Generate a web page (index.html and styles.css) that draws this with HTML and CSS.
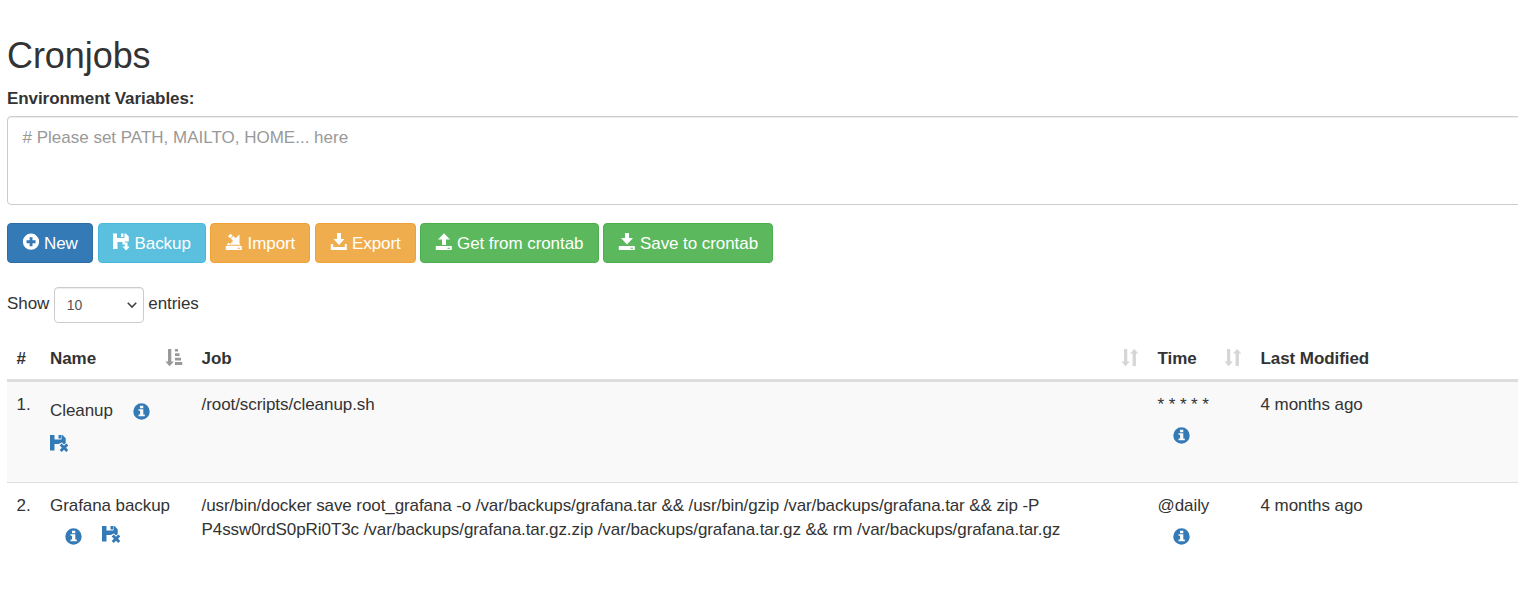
FILE: index.html
```html
<!DOCTYPE html>
<html lang="en">
<head>
<meta charset="utf-8">
<title>Cronjobs</title>
<link rel="stylesheet" href="styles.css">
</head>
<body>
<svg class="sprite" aria-hidden="true">
  <symbol id="plus" viewBox="0 0 17 17"><path fill-rule="evenodd" d="M8.500.5a7.700 7.700 0 1 1 0 15.400 7.700 7.700 0 0 1 0-15.400ZM7.200 4v2.800H4.300v2.900h2.900v2.800h2.700V9.700h2.900V6.800H9.900V4Z"/></symbol>
  <symbol id="backup" viewBox="0 0 18 18"><path d="M0 .5h4v4.500h7.500V.5h1.300l3 3V8.500h-4v3H9.500V9H4.500v7H0ZM8 .5h2.500v3.500H8ZM11.800 9.500h2.700v4h2.300L13.100 17.500l-3.600-4h2.300Z"/></symbol>
  <symbol id="saved-x" viewBox="0 0 18 18"><path d="M0 0h4.500v4.500h7V0h1l3.200 3.200V8L14 9.500 12 7.500 8.500 9H4.500v6.500H0ZM8.500 0H11v3.500H8.500ZM11.700 8.500l2.300 2.200 2.300-2.200 2 1.900-2.200 2.300 2.200 2.300-2 1.900-2.300-2.200-2.300 2.200-2-1.900 2.200-2.300-2.200-2.300Z"/></symbol>
  <symbol id="import" viewBox="0 0 18 18"><path fill-rule="evenodd" d="M3 3.300 5.600.8l2 2-2.500 2.500ZM5.800 5.500 8.300 3l2.300 2.300L14.500 1.500v9.800H4.800L8 8ZM3.500 9.500 1.700 12.300h14.100l-1-1.300H5ZM.8 13h16v4H.8ZM12.500 14.700v1h2.500v-1Z"/></symbol>
  <symbol id="export" viewBox="0 0 18 18"><path d="M7 0h4v6h3.500L9 12 3.500 6H7ZM.8 11h2.400v3h11.600v-3h2v6H.8Z"/></symbol>
  <symbol id="open" viewBox="0 0 18 18"><path fill-rule="evenodd" d="M9 .3l6 6.200h-4V12H7V6.500H3ZM.8 13h16v4H.8ZM12.500 14.700v1h2.500v-1Z"/></symbol>
  <symbol id="save" viewBox="0 0 18 18"><path fill-rule="evenodd" d="M7 0h4v5h4L9 11.500 3 5h4ZM.8 13h16v4H.8ZM12.500 14.700v1h2.500v-1Z"/></symbol>
  <symbol id="info" viewBox="0 0 17 17"><path fill-rule="evenodd" d="M8.500.3a8.200 8.200 0 1 1 0 16.400 8.200 8.200 0 0 1 0-16.400ZM7 2.700v2.500h3.300V2.700ZM5.500 6.300v1.500h1.600v3.800H5.500v1.600h6.300v-1.600h-1.500V6.300Z"/></symbol>
  <symbol id="sorted" viewBox="0 0 18 18"><path d="M3 0h3.300v12.500h2.500L4.600 17.200.4 12.500H3ZM10 0h3v2.600h-3ZM10 4.300h4.500v2.800H10ZM10 8.700h6v2.800h-6ZM10 13h7.300v3H10Z"/></symbol>
  <symbol id="sort" viewBox="0 0 18 18"><path d="M3 0h3.300v12.500h2.500L4.600 17.200.4 12.500H3ZM13.200 0l4.200 4.600h-2.500V17h-3.300V4.600H9Z"/></symbol>
</svg>
<main class="page">
  <h1 class="title">Cronjobs</h1>
  <label class="env-label" for="env">Environment Variables:</label>
  <textarea class="env-input" id="env" placeholder="# Please set PATH, MAILTO, HOME... here"></textarea>
  <div class="toolbar">
    <a class="btn btn-new"><svg class="icon"><use href="#plus"/></svg><span>New</span></a>
    <a class="btn btn-backup"><svg class="icon"><use href="#backup"/></svg><span>Backup</span></a>
    <a class="btn btn-import"><svg class="icon"><use href="#import"/></svg><span>Import</span></a>
    <a class="btn btn-export"><svg class="icon"><use href="#export"/></svg><span>Export</span></a>
    <a class="btn btn-get"><svg class="icon"><use href="#open"/></svg><span>Get from crontab</span></a>
    <a class="btn btn-save"><svg class="icon"><use href="#save"/></svg><span>Save to crontab</span></a>
  </div>
  <div class="length"><span>Show</span>
    <div class="select"><span>10</span><svg class="chevron" viewBox="0 0 10 6"><path d="M.8.8 5 5 9.200.8"/></svg></div>
    <span>entries</span></div>
  <div class="table">
    <div class="row head">
      <div class="cell">#</div>
      <div class="cell name">Name<svg class="icon sort active"><use href="#sorted"/></svg></div>
      <div class="cell">Job<svg class="icon sort"><use href="#sort"/></svg></div>
      <div class="cell">Time<svg class="icon sort"><use href="#sort"/></svg></div>
      <div class="cell">Last Modified</div>
    </div>
    <div class="row first">
      <div class="cell">1.</div>
      <div class="cell name cleanup"><div class="line"><span>Cleanup</span><svg class="icon info"><use href="#info"/></svg></div><svg class="icon saved"><use href="#saved-x"/></svg></div>
      <div class="cell">/root/scripts/cleanup.sh</div>
      <div class="cell"><span class="stars">* * * * *</span><svg class="icon info time-info"><use href="#info"/></svg></div>
      <div class="cell">4 months ago</div>
    </div>
    <div class="row second">
      <div class="cell">2.</div>
      <div class="cell name"><span>Grafana backup</span><div class="actions"><svg class="icon info"><use href="#info"/></svg><svg class="icon saved"><use href="#saved-x"/></svg></div></div>
      <div class="cell"><div class="command">/usr/bin/docker save root_grafana -o /var/backups/grafana.tar &amp;&amp; /usr/bin/gzip /var/backups/grafana.tar &amp;&amp; zip -P</div><div>P4ssw0rdS0pRi0T3c /var/backups/grafana.tar.gz.zip /var/backups/grafana.tar.gz &amp;&amp; rm /var/backups/grafana.tar.gz</div></div>
      <div class="cell"><span>@daily</span><svg class="icon info time-info"><use href="#info"/></svg></div>
      <div class="cell">4 months ago</div>
    </div>
  </div>
</main>
</body>
</html>
```
FILE: styles.css
```css
* { box-sizing: border-box; }
body { margin: 0; overflow: hidden; background: #fff; color: #333; font: 17px/24px "Liberation Sans", Arial, sans-serif; letter-spacing: -.07px; }
.sprite { display: none; }
.page { width: 1540px; padding: 36px 0 0 7px; }
.title { margin: 0; font-size: 36px; font-weight: 400; line-height: 40px; }
.env-label { display: block; margin-top: 11px; font-weight: 700; }
.env-input { display: block; width: 1533px; height: 89px; margin-top: 5px; padding: 9px 14px 7px 14.500px; border: 1px solid #ccc; border-radius: 4px; box-shadow: inset 0 1px 1px rgba(0, 0, 0, .075); font: inherit; letter-spacing: 0; resize: none; overflow: hidden; }
.env-input::placeholder { color: #999; opacity: 1; }
.toolbar { display: flex; gap: 4px; margin-top: 18px; }
.btn { display: flex; align-items: center; gap: 4px; height: 40px; padding: 1px 0 0 14px; border: 1px solid; border-radius: 4px; color: #fff; white-space: nowrap; }
.icon { display: block; flex: none; width: 18px; height: 18px; fill: currentColor; }
.btn .icon { margin-top: -3px; }
.btn-new { width: 86px; margin-right: 1px; background: #337ab7; border-color: #2e6da4; }
.btn-backup { width: 108px; gap: 3.500px; background: #5bc0de; border-color: #46b8da; }
.btn-import { width: 100px; margin-right: 1px; gap: 4.500px; background: #f0ad4e; border-color: #eea236; }
.btn-export { width: 101px; background: #f0ad4e; border-color: #eea236; }
.btn-get { width: 179px; background: #5cb85c; border-color: #4cae4c; }
.btn-save { width: 170px; background: #5cb85c; border-color: #4cae4c; }
.length { display: flex; height: 36px; margin-top: 24px; line-height: 33px; }
.select { display: flex; align-items: center; justify-content: space-between; width: 90px; height: 36px; margin: 0 4.500px; padding: 0 6px 0 12px; border: 1px solid #ccc; border-radius: 4px; box-shadow: inset 0 1px 1px rgba(0, 0, 0, .075); color: #555; font-size: 14px; letter-spacing: 0; }
.chevron { width: 10px; height: 6px; fill: none; stroke: #444; stroke-width: 1.600; overflow: visible; }
.table { margin-top: 14px; }
.row { display: grid; grid-template-columns: 34px 151px 956px 103px 1fr; }
.cell { padding: 11px 9px 0 9.500px; white-space: nowrap; }
.cell.name { padding-left: 9px; }
.head { height: 45px; border-bottom: 3px solid #ddd; font-weight: 700; }
.head .cell { display: flex; padding-top: 10px; }
.sort { margin: 2px 0 0 auto; color: #d6d6d6; }
.active { color: #999; }
.first { height: 100px; background: #f9f9f9; }
.second { height: 110px; border-top: 1px solid #ddd; }
.info { width: 17px; height: 17px; color: #337ab7; }
.saved { color: #337ab7; }
.cell.cleanup { padding-top: 17px; }
.line { display: flex; align-items: center; gap: 20px; }
.cleanup .saved { margin-top: 12px; }
.stars { display: block; }
.time-info { margin: 10px 0 0 15px; }
.actions { display: flex; gap: 20px; padding: 10px 0 0 15px; }
.actions .saved { margin-top: -2px; }
.command { letter-spacing: -.095px; }
```
